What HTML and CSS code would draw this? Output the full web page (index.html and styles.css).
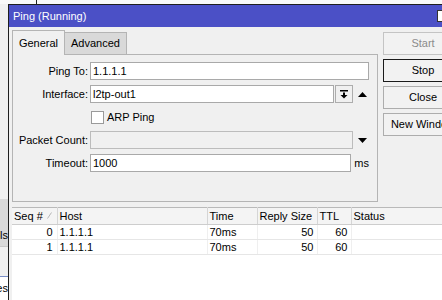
FILE: index.html
```html
<!DOCTYPE html>
<html lang="en">
<head>
  <meta charset="UTF-8">
  <title>Ping (Running)</title>
  <meta name="viewport" content="width=device-width, initial-scale=1.0">
  <link rel="stylesheet" href="styles.css">
</head>
<body>

  <!-- window behind -->
  <div class="back-top"><div class="back-edge"></div></div>

  <div class="desk">
    <div class="back-side">
      <div class="side-a"></div>
      <div class="side-b"><span>Tools</span></div>
      <div class="side-c"></div>
      <div class="side-d"><span>Interfaces</span></div>
    </div>

    <!-- ping window -->
    <div class="window">
      <div class="titlebar">
        <span class="title">Ping (Running)</span>
        <span class="title-btn"></span>
      </div>

      <div class="top">
        <div class="tabbox">
          <div class="tabs">
            <div class="tab active">General</div>
            <div class="tab">Advanced</div>
            <div class="tab-fill"></div>
          </div>

          <div class="panel">
            <div class="row">
              <span class="lbl">Ping To:</span>
              <div class="field">
                <div class="input grow">1.1.1.1</div>
              </div>
            </div>

            <div class="row">
              <span class="lbl">Interface:</span>
              <div class="field">
                <div class="input iface">l2tp-out1</div>
                <div class="drop-btn">
                  <svg width="8" height="9" viewBox="0 0 8 9"><rect x="0" y="0" width="8" height="1.5" fill="#000"/><rect x="3" y="2.5" width="2" height="3" fill="#000"/><path d="M0.5 5 L7.5 5 L4 8.5 Z" fill="#000"/></svg>
                </div>
                <div class="arrow">
                  <svg width="9" height="5" viewBox="0 0 9 5"><path d="M0 5 L4.5 0 L9 5 Z" fill="#000"/></svg>
                </div>
              </div>
            </div>

            <div class="row">
              <span class="lbl"></span>
              <div class="field">
                <span class="check"></span>
                <span class="check-lbl">ARP Ping</span>
              </div>
            </div>

            <div class="row">
              <span class="lbl">Packet Count:</span>
              <div class="field">
                <div class="input off count"></div>
                <div class="arrow">
                  <svg width="9" height="5" viewBox="0 0 9 5"><path d="M0 0 L9 0 L4.5 5 Z" fill="#000"/></svg>
                </div>
              </div>
            </div>

            <div class="row">
              <span class="lbl">Timeout:</span>
              <div class="field">
                <div class="input timeout">1000</div>
                <span class="unit">ms</span>
              </div>
            </div>
          </div>
        </div>

        <div class="buttons">
          <div class="btn off">Start</div>
          <div class="btn main">Stop</div>
          <div class="btn">Close</div>
          <div class="btn">New Window</div>
        </div>
      </div>

      <!-- results -->
      <div class="list">
        <table class="grid">
          <colgroup>
            <col class="c-seq"><col class="c-host"><col class="c-time"><col class="c-size"><col class="c-ttl"><col>
          </colgroup>
          <thead>
            <tr>
              <th>Seq # <svg class="sort" width="5" height="7" viewBox="0 0 5 7"><path d="M0.5 6.5 L4.5 0.5" stroke="#b8b8b8" stroke-width="1" fill="none"/></svg></th>
              <th>Host</th>
              <th>Time</th>
              <th>Reply Size</th>
              <th>TTL</th>
              <th>Status</th>
            </tr>
          </thead>
          <tbody>
            <tr><td class="num seq">0</td><td>1.1.1.1</td><td>70ms</td><td class="num">50</td><td class="num">60</td><td></td></tr>
            <tr><td class="num seq">1</td><td>1.1.1.1</td><td>70ms</td><td class="num">50</td><td class="num">60</td><td></td></tr>
          </tbody>
        </table>
      </div>
    </div>
  </div>

</body>
</html>
```

FILE: styles.css
```css
/* ==== base ==== */
* { margin:0; padding:0; box-sizing:border-box; }
html, body { height:100%; width:100%; overflow:hidden; }
body {
  font-family:"Liberation Sans", Arial, sans-serif;
  font-size:11px; color:#000;
  background:#f0f0f0;
}

/* ==== window behind ==== */
.back-top { height:4px; background:#f9f9f9; }
.back-edge { width:37px; height:4px; border-right:1px solid #222; }
.desk { display:flex; height:296px; }
.back-side { width:8px; flex:none; display:flex; flex-direction:column; overflow:hidden; }
.side-a { height:195px; background:#f0f0f0; }
.side-b {
  height:47px; background:#d9d9d9;
  display:flex; justify-content:flex-end; align-items:flex-end;
  padding-bottom:5px; white-space:nowrap;
}
.side-c { height:30px; background:#f0f0f0; border-top:1px solid #c8c8c8; }
.side-d {
  flex:1; background:#fff; border-top:1px solid #7a8fc8;
  display:flex; justify-content:flex-end; padding-top:5px; white-space:nowrap;
}

/* ==== window ==== */
.window {
  width:460px; flex:none;
  border-top:1px solid #1e1e1e; border-left:1px solid #1e1e1e;
  background:#f0f0f0;
  display:flex; flex-direction:column;
}
.titlebar {
  height:22px; flex:none; background:#4b50c6; color:#fff;
  display:flex; align-items:center; justify-content:space-between;
  padding-left:4px;
}
.title { font-size:11px; }
.title-btn {
  width:14px; height:12px; margin-right:17px;
  background:#fff; border:1px solid #333;
}

/* ==== top part ==== */
.top { display:flex; gap:5px; padding:3px 0 0 3px; }
.tabbox { width:366px; flex:none; }

.tabs { display:flex; align-items:flex-end; height:25px; }
.tab {
  height:23px; line-height:21px; text-align:center;
  border:1px solid #b4b4b4; background:#d9d9d9;
}
.tab:nth-child(1) { width:53px; }
.tab:nth-child(2) { width:62px; border-left:none; }
.tab.active {
  height:25px; line-height:24px; background:#f0f0f0;
  border-bottom:none;
}
.tab-fill { flex:1; height:1px; background:#b4b4b4; }

.panel {
  height:147px; padding:7px 0 0 0;
  border:1px solid #b4b4b4; border-top:none;
}
.row { display:flex; align-items:center; height:18px; margin-bottom:5px; }
.lbl { width:75px; margin-right:2px; text-align:right; }
.field { width:279px; display:flex; align-items:center; height:18px; }

.input {
  height:18px; line-height:16px; padding:0 2px;
  background:#fff; border:1px solid #a9a9a9;
  white-space:nowrap; overflow:hidden;
}
.input.grow { flex:1; }
.input.iface { width:244px; margin-right:1px; }
.input.count { width:263px; }
.input.timeout { width:262px; }
.input.off { background:#f0f0f0; border-color:#bcbcbc; }

.drop-btn {
  width:18px; height:18px; background:#f0f0f0; border:1px solid #adadad;
  display:flex; align-items:center; justify-content:center;
}
.arrow { width:16px; padding-left:5px; display:flex; align-items:center; }
.unit { padding-left:3px; }

.check {
  width:13px; height:13px; margin:1px 3px 0 1px;
  background:#fff; border:1px solid #9a9a9a;
}

/* ==== buttons ==== */
.buttons { width:80px; flex:none; display:flex; flex-direction:column; gap:4px; margin-top:2px; }
.btn {
  height:23px; line-height:21px; text-align:center; white-space:nowrap;
  background:#f2f2f2; border:1px solid #adadad;
}
.btn.off { color:#8b8b8b; border-color:#c4c4c4; }
.btn.main { border-color:#1a1a1a; }

/* ==== result list ==== */
.list { flex:1; margin:5px 0 0 3px; background:#fff; }
.grid { border-collapse:collapse; table-layout:fixed; width:456px; }
.c-seq { width:45px; }
.c-host { width:150px; }
.c-time { width:50px; }
.c-size { width:60px; }
.c-ttl { width:34px; }
.grid th {
  height:17px; padding:0 2px; text-align:left; font-weight:normal;
  background:#f4f4f4;
  border-top:1px solid #b9b9b9; border-bottom:1px solid #cdcdcd;
  border-right:1px solid #d5d5d5; white-space:nowrap;
}
.sort { margin-left:1px; vertical-align:1px; }
.grid td {
  height:15px; padding:0 2px; white-space:nowrap;
  border-bottom:1px solid #e6e6e6; border-right:1px solid #efefef;
}
.grid td.num { text-align:right; padding-right:3px; }
.grid td.seq { padding-right:4px; }
```
